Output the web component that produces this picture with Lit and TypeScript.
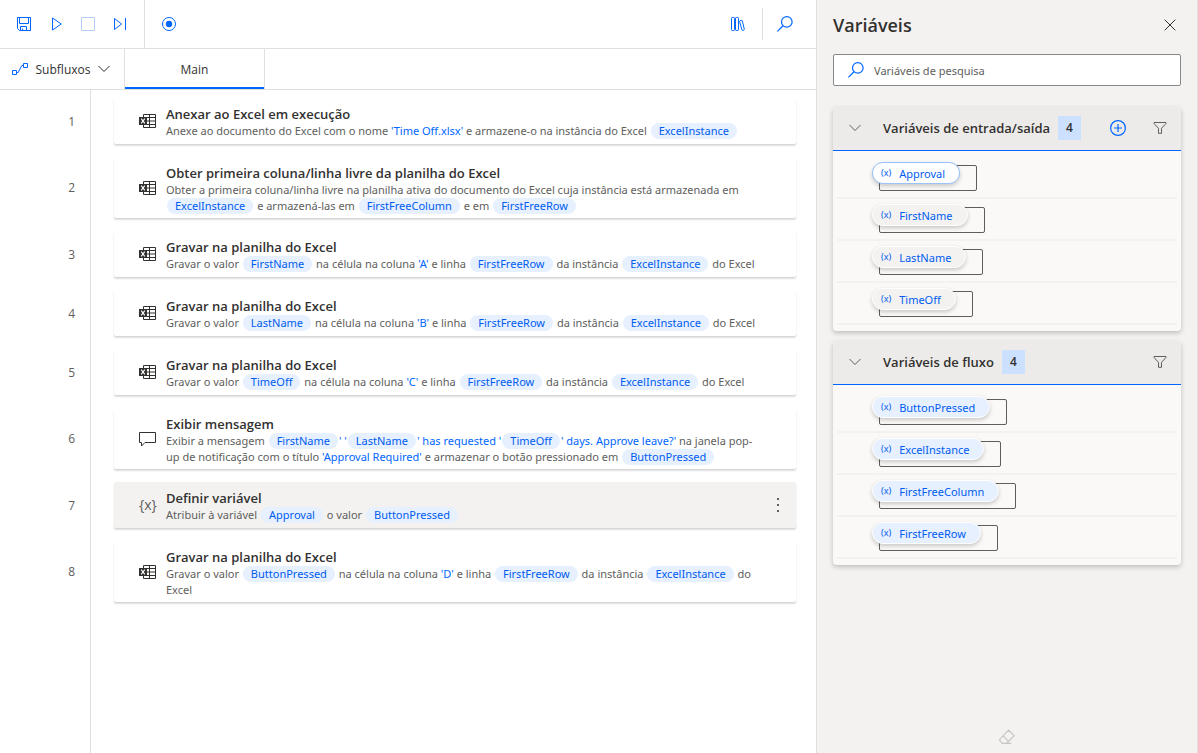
import { LitElement, html, svg, css, nothing } from "lit";
import { customElement, property } from "lit/decorators.js";
import { classMap } from "lit/directives/class-map.js";

type Part = string | { v: string } | { lit: string };
interface Step {
  icon: "excel" | "message" | "variable";
  title: string;
  parts: Part[];
  selected?: boolean;
}

const v = (name: string) => ({ v: name });
const lit = (text: string) => ({ lit: text });

const writeCell = (value: string, column: string): Step => ({
  icon: "excel",
  title: "Gravar na planilha do Excel",
  parts: [
    "Gravar o valor ", v(value), " na célula na coluna ", lit(`'${column}'`), " e linha ",
    v("FirstFreeRow"), " da instância ", v("ExcelInstance"), " do Excel",
  ],
});

const STEPS: Step[] = [
  {
    icon: "excel",
    title: "Anexar ao Excel em execução",
    parts: [
      "Anexe ao documento do Excel com o nome ", lit("'Time Off.xlsx'"),
      " e armazene-o na instância do Excel ", v("ExcelInstance"),
    ],
  },
  {
    icon: "excel",
    title: "Obter primeira coluna/linha livre da planilha do Excel",
    parts: [
      "Obter a primeira coluna/linha livre na planilha ativa do documento do Excel cuja instância está armazenada em ",
      v("ExcelInstance"), " e armazená-las em ", v("FirstFreeColumn"), " e em ", v("FirstFreeRow"),
    ],
  },
  writeCell("FirstName", "A"),
  writeCell("LastName", "B"),
  writeCell("TimeOff", "C"),
  {
    icon: "message",
    title: "Exibir mensagem",
    parts: [
      "Exibir a mensagem ", v("FirstName"), lit("' '"), v("LastName"), lit("' has requested '"),
      v("TimeOff"), lit("' days. Approve leave?'"),
      " na janela pop-up de notificação com o título ", lit("'Approval Required'"),
      " e armazenar o botão pressionado em ", v("ButtonPressed"),
    ],
  },
  {
    icon: "variable",
    title: "Definir variável",
    parts: ["Atribuir à variável ", v("Approval"), " o valor ", v("ButtonPressed")],
    selected: true,
  },
  writeCell("ButtonPressed", "D"),
];

const icon = (w: number, h: number, body: unknown) => html`<svg
  width=${w} height=${h} viewBox="0 0 ${w} ${h}" fill="none" stroke="currentColor" aria-hidden="true">${body}</svg>`;

const saveIcon = icon(14, 14, svg`
  <path d="M.5.5h13v13H2.5l-2-2z"/><path d="M2.5.5v6h9v-6M3.5 13.5v-4h6v4M5.5 11.5v2"/>`);
const playIcon = icon(14, 14, svg`<path d="M3.5 1v12L12.300 7z"/>`);
const stopIcon = icon(14, 14, svg`<path d="M.5.5h13v13H.5z"/>`);
const stepIcon = icon(14, 14, svg`<path d="M1.5 1.5v11L8.500 7zM12.500 1v12"/>`);
const recordIcon = icon(14, 14, svg`<circle cx="7" cy="7" r="6.500"/><circle cx="7" cy="7" r="3.200" fill="currentColor" stroke="none"/>`);
const libraryIcon = icon(14, 14, svg`
  <rect x=".5" y=".5" width="3" height="13" rx=".8"/><rect x="4.500" y=".5" width="3" height="13" rx=".8"/>
  <path d="M9 3.700l1.500-.4q.6-.1.800.500l2 8.500q0 .6-.500.800l-1 .3q-.7.1-.9-.5L8.600 4.500q-.1-.6.4-.8z"/>`);
const searchIcon = icon(16, 16, svg`<circle cx="9.800" cy="5.900" r="5.300" stroke-width="1.200"/><path d="M6 9.700L.400 15.400" stroke-width="1.300"/>`);
const subflowIcon = icon(16, 12, svg`<path d="M.5 7.500h4v4h-4zM11.500.5h4v4h-4z"/><path d="M4.500 9.500h1.700l3.600-7h1.700"/>`);
const chevronIcon = icon(12, 8, svg`<path d="M.5 1L6 6.500 11.500 1"/>`);
const closeIcon = icon(12, 12, svg`<path d="M.7.700l10.600 10.600M11.300.700L.700 11.300"/>`);
const addIcon = icon(16, 16, svg`<circle cx="8" cy="8" r="7.400" stroke-width="1.200"/><path d="M8 4v8M4 8h8" stroke-width="1.200"/>`);
const filterIcon = icon(14, 12, svg`<path d="M1 .5h12v1L8.500 6.300v5h-3v-5L1 1.500z"/>`);
const eraserIcon = icon(16, 16, svg`<path stroke-width="1.200" d="M9.600 1.200l5.600 5.500-7.700 7.600H3.300L.800 11.500v-1.300zM4 6.800l5.600 5.600M3.500 14.400h8.800"/>`);
const moreIcon = icon(4, 16, svg`<path d="M1 1h2v2H1zM1 7h2v2H1zM1 13h2v2H1z" fill="currentColor" stroke="none"/>`);
const excelIcon = icon(17, 14, svg`
  <path d="M4.500 3.500v-3h12v13h-12v-3M4.500 3.500h12M8 7h8.500M8 10.500h8.500M10.500.5v13"/>
  <path d="M0 3h8v8H0z" fill="currentColor" stroke="none"/>
  <path d="M2.200 4.700l3.600 4.600M5.800 4.700l-3.600 4.600" stroke="#fff" stroke-width="1.100"/>`);
const messageIcon = icon(17, 16, svg`<path d="M.5 1.500h16v10H6L2.500 15v-3.500h-2z"/>`);

const shared = css`
  :host { box-sizing: border-box; }
  *, *::before { box-sizing: border-box; }
  svg { display: block; flex: none; }
  button {
    display: inline-flex; align-items: center; justify-content: center;
    margin: 0; padding: 0; border: 0; background: none; color: inherit; font: inherit;
  }
  .icon-button { width: 32px; height: 32px; flex: none; }
`;

@customElement("flow-step")
class FlowStep extends LitElement {
  @property({ attribute: false }) step!: Step;
  @property({ type: Number }) number = 1;

  static styles = [shared, css`
    :host { display: flex; align-items: center; padding-right: 20px; }
    .number {
      flex: none; width: 114px; padding-right: 39px; text-align: right;
      font-size: 12px; color: #605e5c;
    }
    .card {
      flex: 1; min-width: 0; min-height: 46px; display: flex;
      padding: 4px 3px 4px 25px; border-radius: 2px; background: #fff;
      box-shadow: 0 2px 2px rgba(0, 0, 0, 0.13), 0 1px 1px rgba(0, 0, 0, 0.05);
    }
    .selected { background: #f3f2f1; }
    .icon { align-self: center; width: 27px; flex: none; color: #323130; font-size: 14px; line-height: 16px; }
    .glyph { color: #605e5c; }
    .text { flex: 1; min-width: 0; padding-top: 3px; }
    .title { margin: 0; font-size: 13px; font-weight: 600; line-height: 18px; color: #323130; }
    .description {
      margin: 0; color: #605e5c;
      font-family: "Noto Sans", "Open Sans", sans-serif; font-size: 11px; line-height: 16px;
    }
    .literal { color: #0066ff; }
    .variable {
      display: inline-block; height: 16px; margin: 0 1px; padding: 0 8px; border-radius: 8px;
      background: #e6f0ff; color: #005cf0;
    }
    .actions { width: 30px; flex: none; align-self: center; display: flex; justify-content: center; color: #605e5c; }
  `];

  private renderIcon() {
    if (this.step.icon === "excel") return excelIcon;
    if (this.step.icon === "message") return messageIcon;
    return html`<span class="glyph">{x}</span>`;
  }

  private renderPart(part: Part) {
    if (typeof part === "string") return part;
    return "v" in part
      ? html`<span class="variable">${part.v}</span>`
      : html`<span class="literal">${part.lit}</span>`;
  }

  render() {
    const { title, parts, selected } = this.step;
    return html`
      <span class="number">${this.number}</span>
      <div class=${classMap({ card: true, selected: !!selected })}>
        <div class="icon">${this.renderIcon()}</div>
        <div class="text">
          <h3 class="title">${title}</h3>
          <p class="description">${parts.map((p) => this.renderPart(p))}</p>
        </div>
        <div class="actions">
          ${selected ? html`<button aria-label="Mais ações">${moreIcon}</button>` : nothing}
        </div>
      </div>`;
  }
}

@customElement("variable-group")
class VariableGroup extends LitElement {
  @property() heading = "";
  @property() kind: "io" | "flow" = "flow";
  @property({ type: Boolean }) addable = false;
  @property({ attribute: false }) names: string[] = [];
  @property() active = "";

  static styles = [shared, css`
    :host {
      display: block; border-radius: 4px; background: #faf9f8;
      box-shadow: 0 2px 5px rgba(0, 0, 0, 0.22);
    }
    .header {
      display: flex; align-items: center; height: 44px; padding: 0 5px 1px 0;
      border-bottom: 1px solid #0066ff; border-radius: 4px 4px 0 0;
      background: #edebe9; color: #605e5c;
    }
    .toggle { width: 44px; height: 32px; margin-right: 6px; }
    .heading { margin: 0; font-size: 13px; font-weight: 600; line-height: 20px; color: #323130; }
    .count {
      margin-left: 8px; width: 23px; height: 24px; text-align: center;
      font-size: 12px; font-weight: 600; line-height: 24px; background: #cce0ff; color: #323130;
    }
    .tools { display: flex; gap: 10px; margin-left: auto; }
    .add { color: #0066ff; }
    .list { margin: 0; padding: 6px 4px; list-style: none; }
    .item { height: 42px; padding: 5px 0 0 35px; border-bottom: 2px solid #f3f2f1; }
    .holder { position: relative; display: inline-flex; }
    .holder::before {
      content: ""; position: absolute; left: 7px; top: 3px; width: calc(100% + 10px); height: 26px;
      border: 1px solid #605e5c; border-radius: 2px;
    }
    .chip {
      position: relative; height: 22px; padding: 0 14px 0 8px; gap: 8px;
      border: 1px solid #fff; border-radius: 11px; background: #e6f0ff; color: #005cf0;
      font-family: "Noto Sans", "Open Sans", sans-serif; font-size: 11px;
      box-shadow: 0 2px 4px rgba(0, 0, 0, 0.2);
    }
    .io { background: #f3f2f1; }
    .active { background: #fff; border-color: #99c2ff; }
    .mark { font-size: 9px; line-height: 16px; }
  `];

  render() {
    return html`
      <div class="header">
        <button class="toggle" aria-label="Recolher ${this.heading}">${chevronIcon}</button>
        <h3 class="heading">${this.heading}</h3>
        <span class="count">${this.names.length}</span>
        <div class="tools">
          ${this.addable ? html`<button class="icon-button add" aria-label="Adicionar variável">${addIcon}</button>` : nothing}
          <button class="icon-button" aria-label="Filtrar">${filterIcon}</button>
        </div>
      </div>
      <ul class="list">
        ${this.names.map((name) => html`<li class="item"><span class="holder"><button
          class=${classMap({ chip: true, io: this.kind === "io", active: name === this.active })}
        ><span class="mark">(x)</span><span>${name}</span></button></span></li>`)}
      </ul>`;
  }
}

@customElement("app-root")
class AppRoot extends LitElement {
  static styles = [shared, css`
    :host {
      display: flex; min-height: 100vh; background: #fff; color: #323130;
      font-family: "Open Sans", "Noto Sans", sans-serif; font-size: 12px;
    }
    .designer { flex: 1; min-width: 0; display: flex; flex-direction: column; }
    .toolbar {
      display: flex; align-items: center; height: 49px; flex: none; padding: 0 15px 0 8px;
      border-bottom: 1px solid #e1dfdd; color: #0066ff;
    }
    .toolbar button:disabled { opacity: 0.3; }
    .divider { width: 1px; height: 100%; margin: 0 8px; background: #e1dfdd; }
    .short { height: 32px; margin-right: 6px; }
    .end { display: flex; align-items: center; margin-left: auto; }
    .tabs { display: flex; height: 41px; flex: none; border-bottom: 1px solid #e1dfdd; }
    .subflows { width: 124px; gap: 8px; padding-right: 2px; }
    .subflows-icon { color: #0066ff; }
    .tab {
      width: 141px; border: solid #e1dfdd; border-width: 0 1px;
      box-shadow: inset 0 -2px #0066ff;
    }
    .steps {
      flex: 1; display: flex; flex-direction: column; gap: 13px; margin: 0; padding: 8px 0; list-style: none;
      background: linear-gradient(#e1dfdd, #e1dfdd) 90px 0 / 1px 100% no-repeat;
    }
    .panel {
      width: 382px; flex: none; display: flex; flex-direction: column; padding: 0 16px;
      border: solid #e1dfdd; border-width: 0 1px; background: #f3f2f1;
    }
    .panel-header { display: flex; align-items: center; justify-content: space-between; height: 50px; }
    .panel-title { margin: 0; font-size: 18px; font-weight: 600; line-height: 28px; }
    .close { width: 22px; height: 32px; }
    .search {
      display: flex; align-items: center; gap: 10px; height: 32px; margin: 4px 0 21px; padding: 0 14px;
      border: 1px solid #8a8886; border-radius: 2px; background: #fff; color: #0066ff;
    }
    .search-input {
      flex: 1; min-width: 0; border: 0; padding: 0; outline: 0; background: none; color: #323130;
      font-family: "Noto Sans", "Open Sans", sans-serif; font-size: 11px;
    }
    .search-input::placeholder { color: #605e5c; opacity: 1; }
    .groups { display: flex; flex-direction: column; gap: 10px; }
    .panel-footer { display: flex; justify-content: center; margin-top: auto; color: #c8c6c4; }
  `];

  render() {
    return html`
      <main class="designer">
        <div class="toolbar" role="toolbar" aria-label="Fluxo">
          <button class="icon-button" aria-label="Salvar">${saveIcon}</button>
          <button class="icon-button" aria-label="Executar">${playIcon}</button>
          <button class="icon-button" aria-label="Parar" disabled>${stopIcon}</button>
          <button class="icon-button" aria-label="Próxima ação">${stepIcon}</button>
          <span class="divider"></span>
          <button class="icon-button" aria-label="Gravador">${recordIcon}</button>
          <div class="end">
            <button class="icon-button" aria-label="Biblioteca">${libraryIcon}</button>
            <span class="divider short"></span>
            <button class="icon-button" aria-label="Pesquisar">${searchIcon}</button>
          </div>
        </div>
        <div class="tabs">
          <button class="subflows"><span class="subflows-icon">${subflowIcon}</span><span>Subfluxos</span>${chevronIcon}</button>
          <button class="tab">Main</button>
        </div>
        <ol class="steps">
          ${STEPS.map((step, i) => html`<li><flow-step .step=${step} .number=${i + 1}></flow-step></li>`)}
        </ol>
      </main>
      <aside class="panel">
        <div class="panel-header">
          <h2 class="panel-title">Variáveis</h2>
          <button class="close" aria-label="Fechar">${closeIcon}</button>
        </div>
        <label class="search">
          ${searchIcon}
          <input class="search-input" type="search" placeholder="Variáveis de pesquisa" aria-label="Variáveis de pesquisa">
        </label>
        <div class="groups">
          <variable-group
            heading="Variáveis de entrada/saída" kind="io" addable active="Approval"
            .names=${["Approval", "FirstName", "LastName", "TimeOff"]}
          ></variable-group>
          <variable-group
            heading="Variáveis de fluxo"
            .names=${["ButtonPressed", "ExcelInstance", "FirstFreeColumn", "FirstFreeRow"]}
          ></variable-group>
        </div>
        <div class="panel-footer">
          <button class="icon-button" aria-label="Limpar valores">${eraserIcon}</button>
        </div>
      </aside>`;
  }
}
